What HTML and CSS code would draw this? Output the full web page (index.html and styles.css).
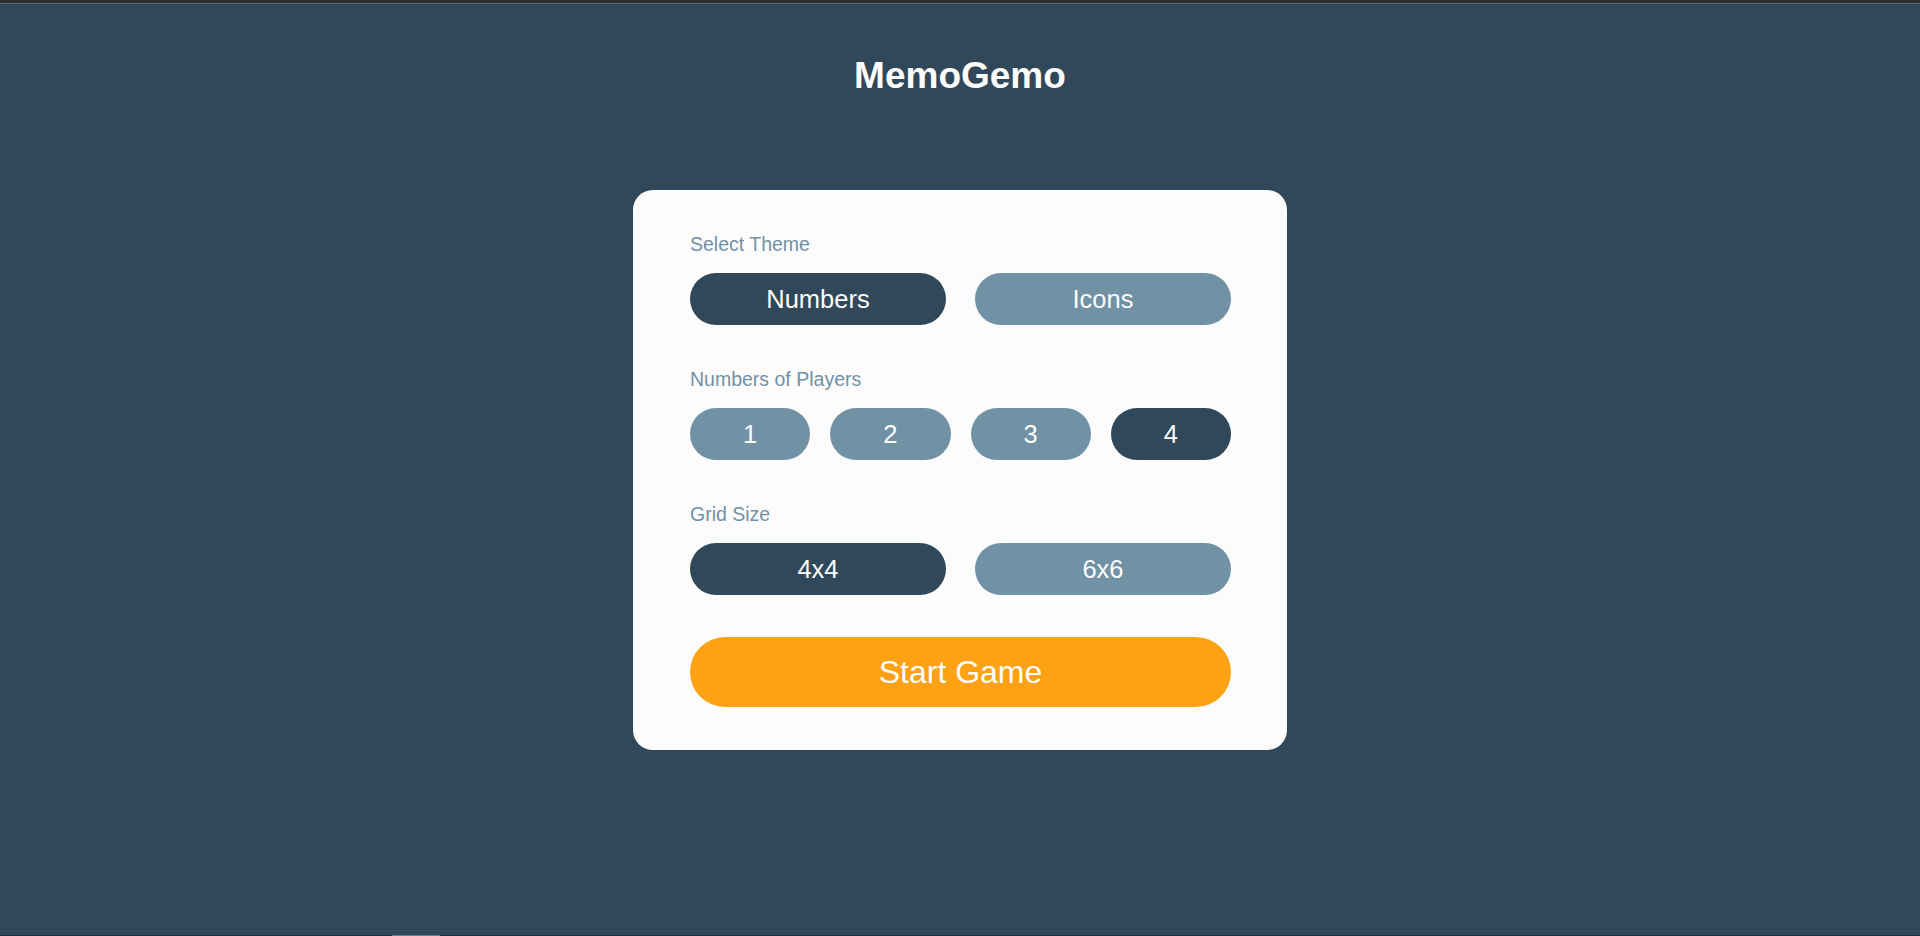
FILE: index.html
```html
<!DOCTYPE html>
<html lang="en">
<head>
<meta charset="utf-8">
<title>MemoGemo</title>
<link rel="stylesheet" href="styles.css">
</head>
<body>
  <div class="topbar"></div>
  <main class="page">
    <h1 class="title">MemoGemo</h1>
    <section class="card">
      <div class="group">
        <div class="label">Select Theme</div>
        <div class="row row-2">
          <button class="opt active">Numbers</button>
          <button class="opt">Icons</button>
        </div>
      </div>
      <div class="group">
        <div class="label">Numbers of Players</div>
        <div class="row row-4">
          <button class="opt">1</button>
          <button class="opt">2</button>
          <button class="opt">3</button>
          <button class="opt active">4</button>
        </div>
      </div>
      <div class="group">
        <div class="label">Grid Size</div>
        <div class="row row-2">
          <button class="opt active">4x4</button>
          <button class="opt">6x6</button>
        </div>
      </div>
      <button class="start">Start Game</button>
    </section>
  </main>
  <div class="bottombar"><span class="thumb"></span></div>
</body>
</html>
```

FILE: styles.css
```css
* { box-sizing: border-box; }

html, body {
  margin: 0;
  padding: 0;
  height: 100%;
}

body {
  background: #304859;
  font-family: "Liberation Sans", Arial, sans-serif;
  display: flex;
  flex-direction: column;
  height: 936px;
  overflow: hidden;
}

.topbar {
  height: 4px;
  flex: 0 0 4px;
  background: #2b2d30;
  border-bottom: 1px solid #5d6570;
}

.page {
  flex: 1 1 auto;
  display: flex;
  flex-direction: column;
  align-items: center;
}

.title {
  margin: 53px 0 0;
  font-size: 37px;
  font-weight: 700;
  line-height: 38px;
  color: #fcfcfc;
  letter-spacing: 0;
}

.card {
  margin-top: 95px;
  width: 654px;
  background: #fcfcfc;
  border-radius: 20px;
  padding: 44px 56px 43px 57px;
  display: flex;
  flex-direction: column;
}

.group {
  margin-bottom: 44px;
}

.group:nth-child(3) {
  margin-bottom: 42px;
}

.label {
  font-size: 19.5px;
  line-height: 21px;
  color: #7191a5;
  margin-bottom: 18px;
}

.row {
  display: grid;
  height: 52px;
}

.row-2 {
  grid-template-columns: 1fr 1fr;
  column-gap: 29px;
}

.row-4 {
  grid-template-columns: repeat(4, 1fr);
  column-gap: 20px;
}

.opt {
  border: none;
  margin: 0;
  padding: 0;
  height: 52px;
  border-radius: 26px;
  background: #7191a5;
  color: #fcfcfc;
  font-family: "Liberation Sans", Arial, sans-serif;
  font-size: 25.5px;
  line-height: 52px;
  text-align: center;
}

.opt.active {
  background: #304859;
}

.start {
  border: none;
  margin: 0;
  padding: 0;
  height: 70px;
  border-radius: 35px;
  background: #fda214;
  color: #fcfcfc;
  font-family: "Liberation Sans", Arial, sans-serif;
  font-size: 32px;
  line-height: 70px;
  text-align: center;
}

.bottombar {
  flex: 0 0 1px;
  height: 1px;
  background: #22303b;
  padding-left: 392px;
  display: flex;
}

.thumb {
  width: 48px;
  height: 1px;
  background: #6f7f8b;
}
```
